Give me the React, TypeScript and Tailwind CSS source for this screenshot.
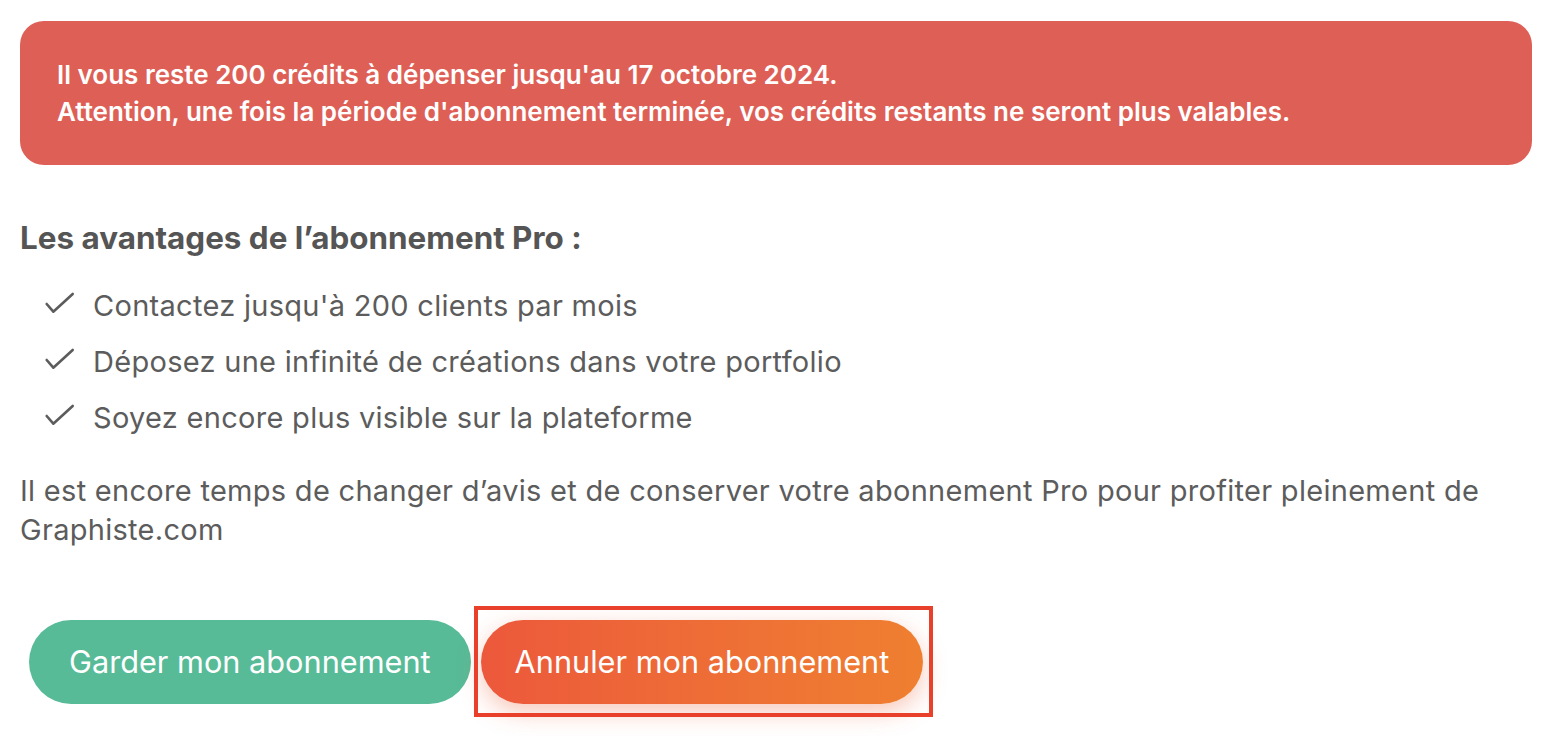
import React from 'react';

const avantages = [
    'Contactez jusqu\'à 200 clients par mois',
    'Déposez une infinité de créations dans votre portfolio',
    'Soyez encore plus visible sur la plateforme',
];

const CheckMark: React.FC = () => (
    <svg width="31" height="28" viewBox="0 0 31 28" fill="none" className="flex-shrink-0">
        <polyline points="2.7,12 9.3,19.7 28.7,2" stroke="#5c5c5c" strokeWidth="2.6" strokeLinecap="round" strokeLinejoin="round" />
    </svg>
);

export default function App() {
    return (
        <div className="w-full min-h-screen bg-white pl-5 pr-[26px] pt-[21px] font-['Inter',sans-serif] text-[#5c5c5c]">
            {/* alerte crédits */}
            <div className="w-full rounded-[24px] bg-[#de5f56] px-[37px] py-[35px] text-white font-semibold text-[26px] leading-[37px]">
                Il vous reste 200 crédits à dépenser jusqu'au 17 octobre 2024.
                <br />
                Attention, une fois la période d'abonnement terminée, vos crédits restants ne seront plus valables.
            </div>

            <h3 className="mt-[55px] font-bold text-[31.4px] leading-[36px] text-[#555555]">
                Les avantages de l’abonnement Pro :
            </h3>

            <ul className="mt-[22px]">
                {avantages.map((item, i) => (
                    <li key={i} className="flex items-center h-[56px] pl-6 gap-[18px] text-[29px] tracking-[0.01em]">
                        <CheckMark />
                        <span>{item}</span>
                    </li>
                ))}
            </ul>

            <p className="mt-[25px] text-[29px] leading-[39px] tracking-[0.01em]">
                Il est encore temps de changer d’avis et de conserver votre abonnement Pro pour profiter pleinement de
                <br />
                Graphiste.com
            </p>

            <div className="mt-[71px] flex items-center gap-[10px] pl-[9px]">
                <button className="h-[84px] px-[40px] rounded-full bg-[#57bb98] text-white text-[30.7px]">
                    Garder mon abonnement
                </button>
                <div className="relative">
                    <button className="h-[84px] px-[34px] rounded-full bg-gradient-to-r from-[#ec583b] to-[#ef7f30] text-white text-[30.7px] shadow-[0_8px_24px_rgba(236,98,56,0.35)]">
                        Annuler mon abonnement
                    </button>
                    <span className="absolute -left-[7px] -right-[10px] -top-[14px] -bottom-[13px] border-4 border-[#e8402a] pointer-events-none" />
                </div>
            </div>
        </div>
    );
}
